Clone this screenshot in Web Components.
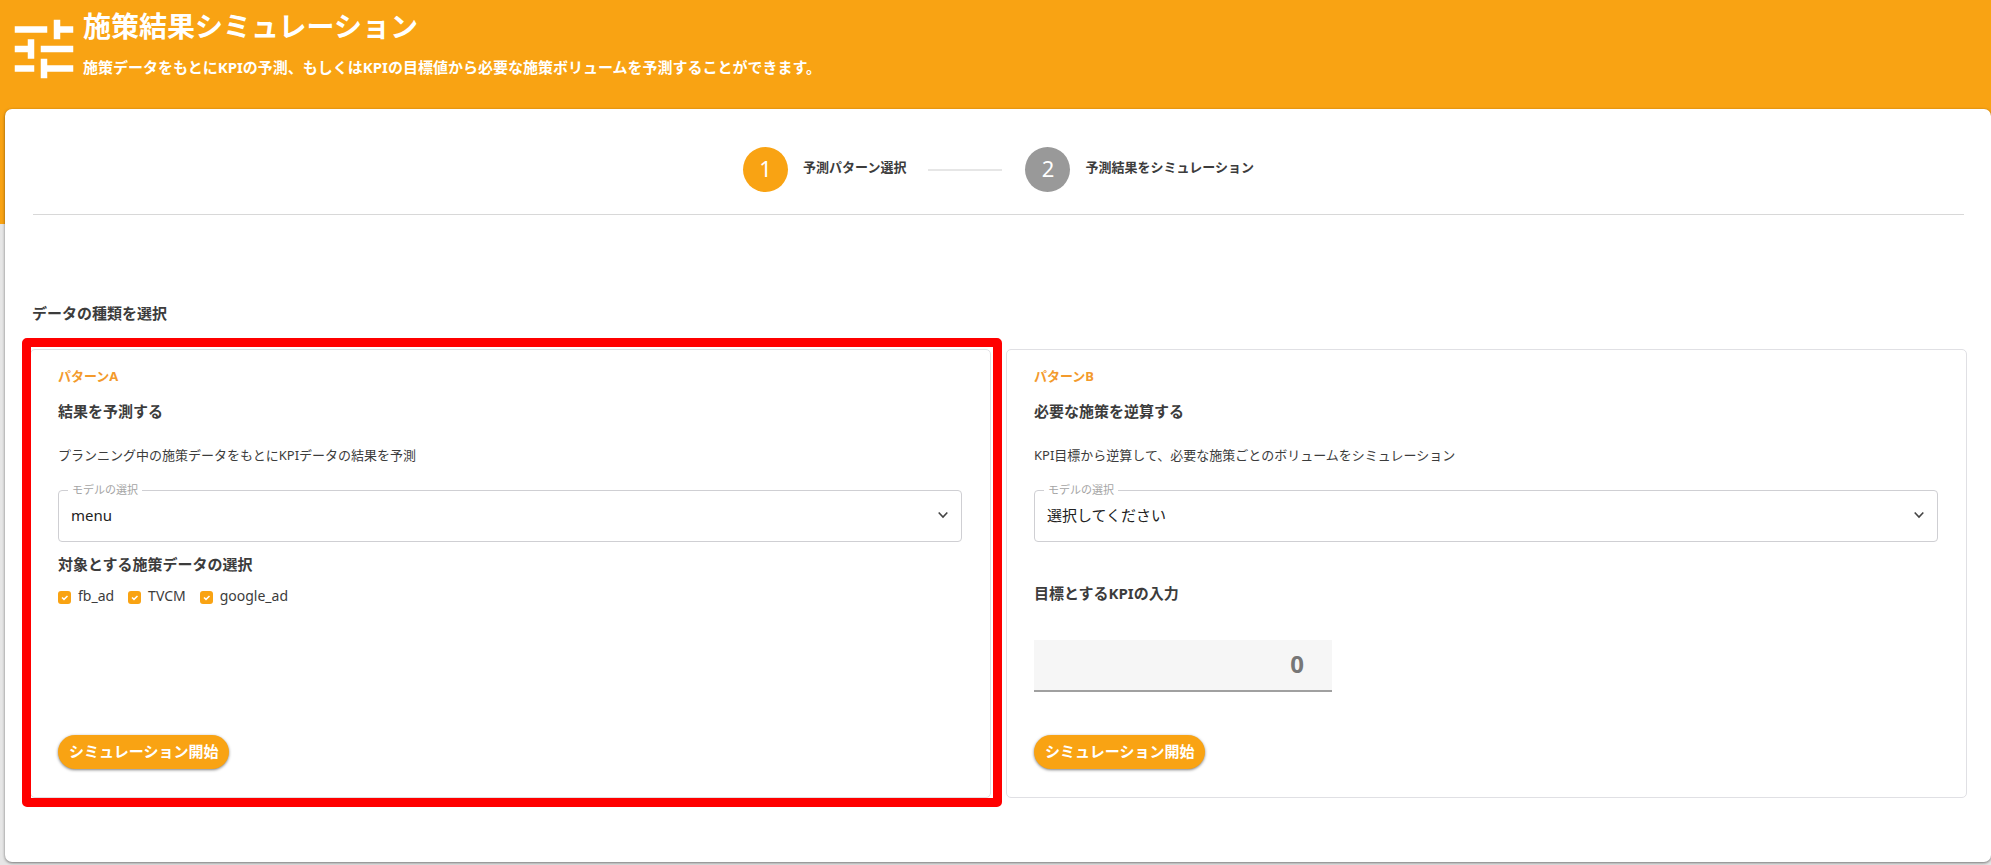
<!DOCTYPE html>
<html lang="ja">
<head>
<meta charset="utf-8">
<meta name="viewport" content="width=device-width, initial-scale=1">
<title>施策結果シミュレーション</title>
<style>
  html { background: #e6e6e6; }
  body {
    margin: 0;
    font-family: "Noto Sans", "Noto Sans CJK JP", sans-serif;
    font-size: 15px;
    line-height: 20px;
    color: #3c3c3c;
    --accent: #f9a313;
    --line: #e0e0e4;
  }
</style>
</head>
<body>
<sim-page>
  <page-header slot="header">
    <span slot="title">施策結果シミュレーション</span>
    <span slot="lead">施策データをもとにKPIの予測、もしくはKPIの目標値から必要な施策ボリュームを予測することができます。</span>
  </page-header>
  <step-bar>
    <step-item number="1" current>予測パターン選択</step-item>
    <step-item number="2">予測結果をシミュレーション</step-item>
  </step-bar>
  <pattern-section heading="データの種類を選択">
    <pattern-card highlighted>
      <span slot="name">パターンA</span>
      <span slot="title">結果を予測する</span>
      <span slot="text">プランニング中の施策データをもとにKPIデータの結果を予測</span>
      <model-select slot="model" label="モデルの選択" value="menu"></model-select>
      <check-group heading="対象とする施策データの選択">
        <check-item>fb_ad</check-item>
        <check-item>TVCM</check-item>
        <check-item>google_ad</check-item>
      </check-group>
      <start-button slot="action">シミュレーション開始</start-button>
    </pattern-card>
    <pattern-card>
      <span slot="name">パターンB</span>
      <span slot="title">必要な施策を逆算する</span>
      <span slot="text">KPI目標から逆算して、必要な施策ごとのボリュームをシミュレーション</span>
      <model-select slot="model" label="モデルの選択" value="選択してください"></model-select>
      <kpi-field label="目標とするKPIの入力"></kpi-field>
      <start-button slot="action">シミュレーション開始</start-button>
    </pattern-card>
  </pattern-section>
</sim-page>

<script>
  const define = (name, markup, setup) => {
    const template = document.createElement('template');
    template.innerHTML = markup;
    customElements.define(name, class extends HTMLElement {
      constructor() {
        super();
        this.attachShadow({ mode: 'open' }).append(template.content.cloneNode(true));
      }
      connectedCallback() {
        if (setup) setup(this, this.shadowRoot);
      }
    });
  };

  define('sim-page', `
    <style>
      :host { display: block; background: linear-gradient(var(--accent) 224px, transparent 224px); padding: 0 0 3px 5px; }
      main {
        background: #fff;
        border-radius: 7px;
        box-shadow: 0 1px 3px rgba(0, 0, 0, .5);
        padding: 38px 24px 64px 25px;
      }
    </style>
    <slot name="header"></slot>
    <main><slot></slot></main>
  `);

  define('page-header', `
    <style>
      :host { display: block; }
      header { display: flex; height: 109px; box-sizing: border-box; padding-top: 10px; color: #fff; font-weight: 700; }
      svg { width: 78px; height: 78px; flex: none; fill: currentColor; }
      h1 { margin: 0; font-size: 28px; line-height: 32px; }
      p { margin: 15px 0 0; }
    </style>
    <header>
      <svg viewBox="0 0 24 24" aria-hidden="true"><path d="M3 17v2h6v-2H3zM3 5v2h10V5H3zm10 16v-2h8v-2h-8v-2h-2v6h2zM7 9v2H3v2h4v2h2V9H7zm14 4v-2H11v2h10zm-6-4h2V7h4V5h-4V3h-2v6z"/></svg>
      <div>
        <h1><slot name="title"></slot></h1>
        <p><slot name="lead"></slot></p>
      </div>
    </header>
  `);

  define('step-bar', `
    <style>
      :host { display: block; border-bottom: 1px solid #d8d8d8; padding-bottom: 22px; margin: 0 3px; }
      nav { display: flex; justify-content: center; }
    </style>
    <nav><slot></slot></nav>
  `);

  define('step-item', `
    <style>
      :host { display: flex; align-items: center; font-size: 13px; font-weight: 700; }
      :host(:not(:first-child))::before {
        content: ""; width: 74px; height: 2px; margin: 0 23px 0 22px; background: #e6e6e6;
      }
      b {
        width: 45px; height: 45px; margin-right: 15px; border-radius: 50%;
        background: #999; color: #fff;
        font-size: 22px; font-weight: 400; line-height: 42px; text-align: center;
      }
      :host([current]) b { background: var(--accent); }
      span { padding-bottom: 5px; }
    </style>
    <b></b><span><slot></slot></span>
  `, (host, root) => {
    root.querySelector('b').textContent = host.getAttribute('number');
  });

  define('pattern-section', `
    <style>
      :host { display: block; padding-top: 88px; }
      h2 { margin: 0 0 26px 2px; font-size: 15px; }
      div { display: grid; grid-template-columns: 1fr 1fr; gap: 15px; }
    </style>
    <h2></h2>
    <div><slot></slot></div>
  `, (host, root) => {
    root.querySelector('h2').textContent = host.getAttribute('heading');
  });

  define('pattern-card', `
    <style>
      :host {
        position: relative; display: flex; flex-direction: column; align-items: stretch;
        border: 1px solid var(--line); border-radius: 5px;
        padding: 16px 28px 28px 27px;
      }
      /* Marks the card that the guide is talking about. */
      :host([highlighted])::after {
        content: ""; position: absolute; inset: -12px -12px -10px -9px;
        border: 9px solid #f00; border-radius: 5px; pointer-events: none;
      }
      .name { color: #f39a2c; font-size: 13px; font-weight: 700; }
      h3 { margin: 15px 0 24px; font-size: 15px; }
      p { margin: 0 0 25px; font-size: 13px; }
      footer { margin-top: auto; }
    </style>
    <div class="name"><slot name="name"></slot></div>
    <h3><slot name="title"></slot></h3>
    <p><slot name="text"></slot></p>
    <slot name="model"></slot>
    <slot></slot>
    <footer><slot name="action"></slot></footer>
  `);

  define('model-select', `
    <style>
      :host { position: relative; display: block; }
      label {
        position: absolute; left: 10px; top: -10px; padding: 0 4px;
        background: #fff; color: #a4a4a4; font-size: 11px;
      }
      select {
        appearance: none; display: block; width: 100%; height: 52px; padding: 0 12px 2px;
        border: 1px solid #cfcfd3; border-radius: 4px; background: #fff;
        font: inherit; color: #222;
      }
      svg {
        position: absolute; right: 14px; top: 19px; width: 10px; height: 12px;
        fill: none; stroke: #444; stroke-width: 1.6; pointer-events: none;
      }
    </style>
    <select id="model"><option></option></select>
    <label for="model"></label>
    <svg viewBox="0 0 10 12" aria-hidden="true"><path d="M.7 3.5 5 8l4.300-4.500"/></svg>
  `, (host, root) => {
    root.querySelector('label').textContent = host.getAttribute('label');
    root.querySelector('option').textContent = host.getAttribute('value');
  });

  define('check-group', `
    <style>
      :host { display: block; padding-top: 12px; }
      fieldset { border: 0; margin: 0; padding: 0; min-width: 0; }
      legend { padding: 0; margin-bottom: 12px; font-weight: 700; }
      div { display: flex; gap: 14px; }
    </style>
    <fieldset><legend></legend><div><slot></slot></div></fieldset>
  `, (host, root) => {
    root.querySelector('legend').textContent = host.getAttribute('heading');
  });

  define('check-item', `
    <style>
      :host { display: block; font-size: 14px; }
      label { display: flex; gap: 7px; }
      .box { display: grid; margin-top: 5px; width: 13px; height: 13px; }
      input, svg { grid-area: 1 / 1; margin: 0; width: 13px; height: 13px; }
      input { appearance: none; border-radius: 3px; background: #ddd; }
      input:checked { background: var(--accent); }
      svg { fill: none; stroke: #fff; stroke-width: 1.5; pointer-events: none; }
    </style>
    <label>
      <span class="box">
        <input type="checkbox" checked>
        <svg viewBox="0 0 13 13" aria-hidden="true"><path d="M4 6.500 6 8.400 9.500 5"/></svg>
      </span>
      <span><slot></slot></span>
    </label>
  `);

  define('kpi-field', `
    <style>
      :host { display: block; padding: 41px 0 43px; }
      label { display: block; margin-bottom: 37px; font-weight: 700; }
      input {
        display: block; box-sizing: border-box; width: 298px; max-width: 100%; height: 52px; padding: 0 28px 4px;
        border: 0; border-bottom: 2px solid #a0a0a0; border-radius: 0; background: #f6f6f6;
        font: inherit; font-size: 24px; font-weight: 700; text-align: right; color: #777;
      }
    </style>
    <label for="kpi"></label>
    <input id="kpi" type="text" inputmode="numeric" value="0">
  `, (host, root) => {
    root.querySelector('label').textContent = host.getAttribute('label');
  });

  define('start-button', `
    <style>
      :host { display: block; }
      button {
        display: block; height: 34px; padding: 0 11px 2px; border: 0; border-radius: 17px;
        background: var(--accent); box-shadow: 0 1px 3px rgba(0, 0, 0, .5);
        font: inherit; font-weight: 700; color: #fff;
      }
    </style>
    <button type="button"><slot></slot></button>
  `);
</script>
</body>
</html>
